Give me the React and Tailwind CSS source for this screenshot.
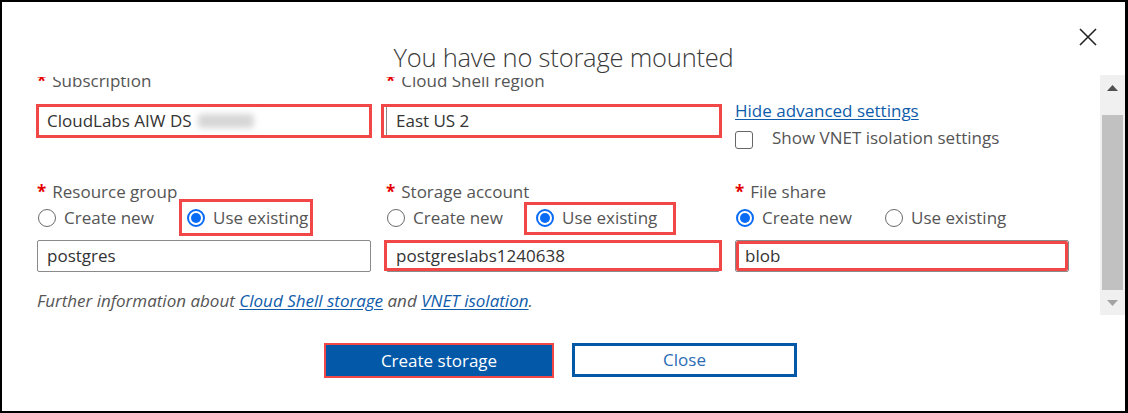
import React from "react";

// Cloud Shell "no storage mounted" dialog with advanced settings open.

const font = "font-['Segoe_UI','Open_Sans',sans-serif]";

function Label({ children }) {
  return (
    <div className="h-[22px] leading-[22px] text-[17px] text-[#555] whitespace-nowrap">
      <span className="text-[#e50000] font-bold mr-[6px]">*</span>
      {children}
    </div>
  );
}

function Radio({ checked, children }) {
  return (
    <div className="flex items-center gap-[8px] h-[30px]">
      {checked ? (
        <span className="w-[18px] h-[18px] rounded-full border-2 border-[#0a6cf5] flex items-center justify-center shrink-0">
          <span className="w-[10px] h-[10px] rounded-full bg-[#0a6cf5]" />
        </span>
      ) : (
        <span className="w-[18px] h-[18px] rounded-full border border-[#6b6b6b] shrink-0" />
      )}
      <span className="text-[17px] text-[#555] whitespace-nowrap">{children}</span>
    </div>
  );
}

function RadioRow({ first, box }) {
  return (
    <div className="relative flex h-[30px] pl-[1px]">
      <div className="w-[149px]">
        <Radio checked={first}>Create new</Radio>
      </div>
      <Radio checked={!first}>Use existing</Radio>
      {box}
    </div>
  );
}

function Input({ children, box }) {
  return (
    <div className="relative h-[32px] border border-[#8a8a8a] rounded-[2px] px-[9px] flex items-center text-[17px] text-[#333]">
      {children}
      {box}
    </div>
  );
}

export default function App() {
  return (
    <div className={`${font} relative w-[1128px] h-[413px] bg-white border-black border-l-2 border-t-2 border-r-[3px] border-b-2 flex flex-col`}>
      {/* header */}
      <div className="h-[73px] shrink-0 flex justify-center pt-[40px]">
        <h1 className="text-[25.5px] leading-[30px] font-light text-[#3a3a3a] tracking-[-0.2px]">
          You have no storage mounted
        </h1>
      </div>
      <button className="absolute left-[1076px] top-[25px] w-[20px] h-[20px]">
        <svg width="20" height="20" viewBox="0 0 20 20" fill="none" stroke="#222" strokeWidth="1.6">
          <path d="M2 2 L18 18 M18 2 L2 18" />
        </svg>
      </button>

      {/* body */}
      <div className="h-[240px] shrink-0 flex">
        <div className="flex-1 overflow-hidden mt-[2px]">
          <div className="mt-[-7px] pl-[35px]">
            {/* row 1 */}
            <div className="grid grid-cols-[334px_334px_334px] gap-x-[15px] items-start">
              <div>
                <Label>Subscription</Label>
                <div className="mt-[13px]">
                  <Input box={<span className="absolute -left-[2px] -right-[2px] -top-[2px] -bottom-[2px] border-[3px] border-[#f24747] pointer-events-none" />}>
                    CloudLabs AIW DS
                    <span className="ml-[6px] w-[56px] h-[14px] rounded bg-[#d6d6d6] blur-[3px]" />
                  </Input>
                </div>
              </div>
              <div>
                <Label>Cloud Shell region</Label>
                <div className="mt-[13px]">
                  <Input box={<span className="absolute -left-[6px] -right-[3px] -top-[2px] -bottom-[2px] border-[3px] border-[#f24747] pointer-events-none" />}>
                    East US 2
                  </Input>
                </div>
              </div>
              <div>
                <a className="block mt-[30px] h-[22px] leading-[22px] text-[17px] text-[#0f5cab] underline underline-offset-2">
                  Hide advanced settings
                </a>
                <div className="mt-[7px] h-[22px] flex items-center">
                  <span className="w-[18px] h-[18px] rounded-[3px] border-[1.5px] border-[#666] shrink-0" />
                  <span className="ml-[19px] text-[17px] text-[#555] -mt-[5px]">Show VNET isolation settings</span>
                </div>
              </div>
            </div>

            {/* row 2 */}
            <div className="mt-[30px] grid grid-cols-[334px_334px_334px] gap-x-[15px] items-start">
              <div>
                <Label>Resource group</Label>
                <RadioRow
                  first={false}
                  box={<span className="absolute left-[142px] w-[134px] -top-[4px] h-[37px] border-[3px] border-[#f24747] pointer-events-none" />}
                />
                <div className="mt-[7px]">
                  <Input>postgres</Input>
                </div>
              </div>
              <div>
                <Label>Storage account</Label>
                <RadioRow
                  first={false}
                  box={<span className="absolute left-[138px] w-[152px] -top-[1px] h-[33px] border-[3px] border-[#f24747] pointer-events-none" />}
                />
                <div className="mt-[7px]">
                  <Input box={<span className="absolute -left-[3px] -right-[3px] -top-[1px] bottom-0 border-[3px] border-[#f24747] pointer-events-none" />}>
                    postgreslabs1240638
                  </Input>
                </div>
              </div>
              <div>
                <Label>File share</Label>
                <RadioRow first={true} />
                <div className="mt-[7px]">
                  <Input box={<span className="absolute inset-0 border-[3px] border-[#f24747] rounded-[2px] pointer-events-none" />}>
                    blob
                  </Input>
                </div>
              </div>
            </div>

            <p className="mt-[18px] h-[22px] leading-[22px] text-[17px] italic text-[#555]">
              Further information about{" "}
              <a className="text-[#0f5cab] underline underline-offset-2">Cloud Shell storage</a> and{" "}
              <a className="text-[#0f5cab] underline underline-offset-2">VNET isolation</a>.
            </p>
          </div>
        </div>

        {/* scrollbar */}
        <div className="w-[25px] shrink-0 bg-[#f0f0f0] flex flex-col">
          <div className="h-[25px] flex items-center justify-center">
            <svg width="11" height="6" viewBox="0 0 11 6">
              <path d="M0 6 L5.5 0 L11 6 Z" fill="#505050" />
            </svg>
          </div>
          <div className="flex-1 flex flex-col justify-end">
            <div className="mx-[2px] h-[175px] bg-[#c1c1c1]" />
          </div>
          <div className="h-[25px] flex items-center justify-center">
            <svg width="11" height="6" viewBox="0 0 11 6">
              <path d="M0 0 L5.5 6 L11 0 Z" fill="#a3a3a3" />
            </svg>
          </div>
        </div>
      </div>

      {/* footer */}
      <div className="flex justify-center gap-[18px] pt-[28px] pr-[6px]">
        <button className="w-[230px] h-[35px] bg-[#0358a8] border-2 border-[#f24747] text-white text-[17px]">
          Create storage
        </button>
        <button className="w-[225px] h-[34px] bg-white border-[3px] border-[#0358a8] text-[#2b6cb5] text-[17px]">
          Close
        </button>
      </div>
    </div>
  );
}
